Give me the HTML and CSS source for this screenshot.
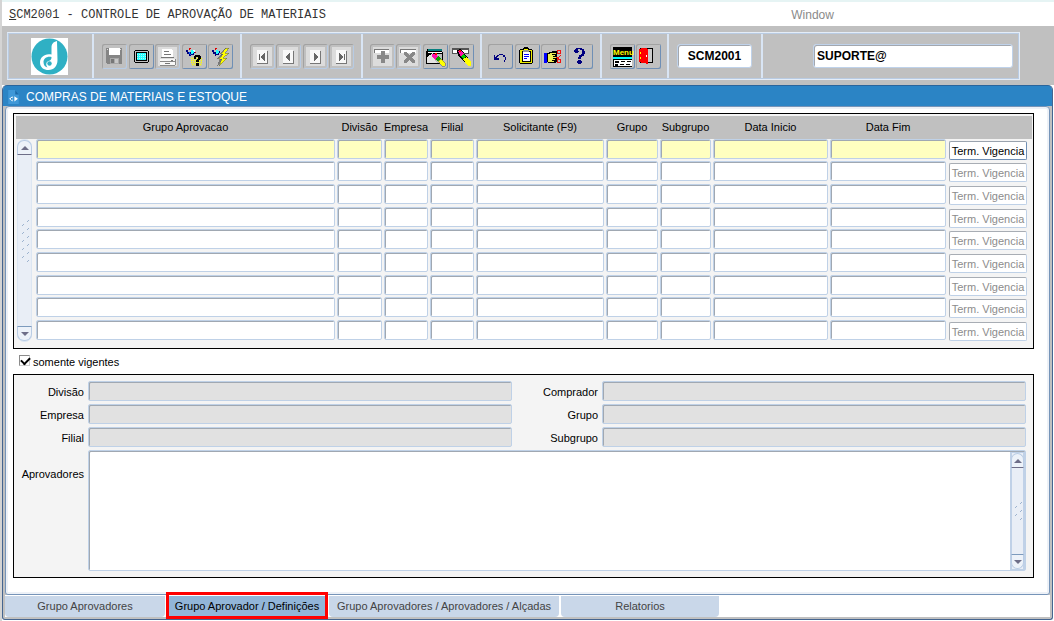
FILE: index.html
```html
<!DOCTYPE html>
<html lang="pt-BR">
<head>
<meta charset="utf-8">
<title>SCM2001 - Controle de Aprovação de Materiais</title>
<link rel="stylesheet" href="styles.css">
</head>
<body>
<header class="menubar">
  <h1 class="menubar-title"><u>S</u>CM2001 - CONTROLE DE APROVAÇÃO DE MATERIAIS</h1>
  <button class="menubar-item" type="button">Window</button>
</header>

<div class="toolbar-area">
  <div class="toolbar">
    <div class="cell cell-logo">
      <svg class="logo" viewBox="0 0 37 37" role="img" aria-label="Logo"><rect width="37" height="37" fill="#fff"/><circle cx="18.5" cy="18.5" r="18" fill="#2fb0c4"/><path d="M26 3C22 4 20.500 6 20.500 10V16.500C14 15 9 19 9 24.500C9 29.500 13 32 17.500 32C23 32 26.500 28 26.500 22Z" fill="#fff"/><path d="M20.500 19C16 18 12.500 20.500 12.500 24C12.500 27 14 29 16.500 29.500C14.500 27 15 24 17.500 23C20 22.500 20.500 21 20.500 19Z" fill="#2fb0c4"/><circle cx="18.500" cy="25.500" r="2.200" fill="#2fb0c4"/></svg>
    </div>
    <div class="cell cell-file">
      <button class="tool" type="button" disabled aria-label="Salvar"><svg viewBox="0 0 25 25"><path d="M4 4H20V20H5L4 19Z" fill="#858585"/><path d="M7 4H18V11H7Z" fill="#fff"/><path d="M5 5H6V6H5ZM18 5H19V6H18Z" fill="#ddd"/><path d="M8 14H17V20H8Z" fill="#a8a8a8"/><path d="M9 15H12V19H9Z" fill="#777"/><path d="M13 15H16V19H13Z" fill="#c8c8c8"/></svg></button>
      <button class="tool" type="button" aria-label="Tela"><svg viewBox="0 0 25 25"><path d="M6 6H19V7H20V18H19V19H6V18H5V7H6Z" fill="#000"/><path d="M6 7H19V18H6Z" fill="#c0c0c0"/><path d="M7 8H18V17H7Z" fill="#000"/><path d="M8 9H17V16H8Z" fill="#2ff"/><path d="M8 10H17M8 12H17M8 14H17" transform="translate(0 .5)" stroke="#b5f5f5" stroke-dasharray="1 1"/></svg></button>
      <button class="tool" type="button" disabled aria-label="Imprimir"><svg viewBox="0 0 25 25"><path d="M3 3H22V22H3Z" fill="#ddd"/><path d="M7 5H16L18 7V13H7Z" fill="#fff"/><path d="M9 7H14V8H9ZM9 10H16V11H9ZM6 13H19V14H6Z" fill="#777"/><path d="M5 15H20V21H5Z" fill="#f8f8f8"/><path d="M5 17H20V18H5ZM5 21H20V22H5ZM20 15H21V21H20Z" fill="#888"/><path d="M16 16H18V17H16ZM10 19H15V20H10Z" fill="#777"/></svg></button>
      <button class="tool" type="button" aria-label="Entrar consulta"><svg viewBox="0 0 25 25"><path d="M9 13H19V14H20V22H10V20H9Z" fill="#cfcf90"/><path d="M9 14.500H20M9 16.500H20M9 18.500H20M10 20.500H20" stroke="#ff0" stroke-dasharray="1 1"/><path d="M4 6H6V8H9V6H11V7H13V9H12V11H9V12H7V10H5V8H4Z" fill="#00007f"/><path d="M7 4H9V5H8V6H7ZM13 8H14V9H13Z" fill="#d00"/><path d="M9 6H11V7H12V9H11V10H9Z" fill="#2ff"/><path d="M7 8H8V10H9V11H8V10H7Z" fill="#06f"/><path d="M11 6H13V8H12V7H11Z" fill="#fff"/><path d="M13 11H18V12H19V15H18V16H17V18H14V16H15V15H16V13H14V15H12V12H13ZM14 19H17V22H14Z" fill="#000"/></svg></button>
      <button class="tool" type="button" aria-label="Executar consulta"><svg viewBox="0 0 25 25"><path d="M4 6H6V8H8V6H10V7H12V9H11V11H8V12H7V10H5V8H4Z" fill="#00007f"/><path d="M7 4H9V5H8V6H7Z" fill="#d00"/><path d="M8 6H10V7H11V9H10V10H8Z" fill="#2ff"/><path d="M17 4H20L15 9H19L13 14H17L10 22H9L12 15H9L13 10H11Z" fill="#777"/><path d="M18 4H21L17 9H21L15 14H19L11 22L14 15H11L15 10H13Z" fill="#ff0" stroke="#555" stroke-width=".5"/></svg></button>
    </div>
    <div class="cell cell-nav">
      <button class="tool tool-nav" type="button" disabled aria-label="Primeiro"><svg viewBox="0 0 25 25"><path d="M7 7H18V20H7Z" fill="#777"/><path d="M7 6H17V19H7Z" fill="#f8f8f8"/><path d="M9 10H10V16H9ZM15 9V17H14V16H13V15H12V14H11V12H12V11H13V10H14V9Z" fill="#666"/></svg></button>
      <button class="tool tool-nav" type="button" disabled aria-label="Anterior"><svg viewBox="0 0 25 25"><path d="M7 7H18V20H7Z" fill="#777"/><path d="M7 6H17V19H7Z" fill="#f8f8f8"/><path d="M14 9V17H13V16H12V15H11V14H10V12H11V11H12V10H13V9Z" fill="#666"/></svg></button>
      <button class="tool tool-nav" type="button" disabled aria-label="Próximo"><svg viewBox="0 0 25 25"><path d="M7 7H18V20H7Z" fill="#777"/><path d="M7 6H17V19H7Z" fill="#f8f8f8"/><path d="M11 9V17H12V16H13V15H14V14H15V12H14V11H13V10H12V9Z" fill="#666"/></svg></button>
      <button class="tool tool-nav" type="button" disabled aria-label="Último"><svg viewBox="0 0 25 25"><path d="M7 7H18V20H7Z" fill="#777"/><path d="M7 6H17V19H7Z" fill="#f8f8f8"/><path d="M15 10H16V16H15ZM10 9V17H11V16H12V15H13V14H14V12H13V11H12V10H11V9Z" fill="#666"/></svg></button>
    </div>
    <div class="cell cell-record">
      <button class="tool tool-nav" type="button" disabled aria-label="Inserir registro"><svg viewBox="0 0 25 25"><path d="M4 5H19V9H4Z" fill="#fff"/><path d="M4 5H19V6H4ZM4 5H5V9H4Z" fill="#777"/><path d="M11 7H15V11H19V15H15V19H11V15H7V11H11Z" fill="#888"/></svg></button>
      <button class="tool tool-nav" type="button" disabled aria-label="Excluir registro"><svg viewBox="0 0 25 25"><path d="M4 5H20V9H4Z" fill="#fff"/><path d="M4 5H20V6H4ZM4 5H5V9H4Z" fill="#777"/><path d="M8 8H11L13.500 11L16 8H19V10L16 13.500L19 17V19H16L13.500 16L11 19H8V17L11 13.500L8 10Z" fill="#888"/></svg></button>
      <button class="tool" type="button" aria-label="Editar registro"><svg viewBox="0 0 25 25"><path d="M4 5H19V8H20V20H3V7H4Z" fill="#000"/><path d="M5 5H19V7H5Z" fill="#078080"/><path d="M5 8H19V9H5Z" fill="#fff"/><path d="M10 10H19V19H10Z" fill="#c0c0c0"/><path d="M4 19V13L10 9V13L14 19Z" fill="#e4e4e4"/><path d="M9 10H13L15 13L12 16L9 13Z" fill="#f1a"/><path d="M12 9H14V11H12Z" fill="#f00"/><path d="M12 15L15 12L18 15L15 18Z" fill="#0a0"/><path d="M15 17L18 15L22 19V22H19Z" fill="#ff0" stroke="#555" stroke-width=".5"/></svg></button>
      <button class="tool" type="button" aria-label="Limpar registro"><svg viewBox="0 0 25 25"><path d="M3 4H20V10H3Z" fill="#555"/><path d="M4 6H19V9H4Z" fill="#fff"/><path d="M8 6L12 5L22 18V22H19L9 11Z" fill="#000"/><path d="M9 7L12 6L15 10L12 13Z" fill="#f1a"/><path d="M10 6H12V8H10Z" fill="#f00"/><path d="M12 12L15 10L17 13L14 15Z" fill="#0c0"/><path d="M14 15L18 13L22 18V22H19Z" fill="#ff0"/></svg></button>
    </div>
    <div class="cell cell-edit">
      <button class="tool" type="button" aria-label="Desfazer"><svg viewBox="0 0 25 25"><path d="M6 11H7V13H8V12H9V11H11V10H15V11H17V13H18V16H17V18H16V16H17V13H15V11H11V12H10V13H9V14H11V16H6Z" fill="#00007f"/></svg></button>
      <button class="tool" type="button" aria-label="Área de transferência"><svg viewBox="0 0 25 25"><path d="M5 5H8V4H9V3H13V4H14V5H17V6H18V19H17V20H5V19H4V6H5Z" fill="#000"/><path d="M5 6H17V19H5Z" fill="#ee0"/><path d="M7 7H16V18H7Z" fill="#000"/><path d="M8 8H15V17H8Z" fill="#fff"/><path d="M8 6H14V8H8Z" fill="#999"/><path d="M9 5H13V6H9Z" fill="#ff0"/><path d="M9 10H14V11H9ZM9 12H14V13H9ZM9 14H12V15H9Z" fill="#00f"/></svg></button>
      <button class="tool" type="button" aria-label="Recortar"><svg viewBox="0 0 25 25"><path d="M3 9H6V19H3Z" fill="#00f"/><path d="M6 9H8V8H11V7H17V10H16V18H15V19H7V18H6Z" fill="#000"/><path d="M7 10H9V9H15V10H11V11H14V12H12V13H15V14H12V15H14V16H11V17H13V18H7Z" fill="#ee5"/><path d="M15 13H18L20 11M15 13L20 17" fill="none" stroke="#e11"/><circle cx="18" cy="8" r="2" fill="none" stroke="#e11"/><circle cx="18" cy="17" r="2" fill="none" stroke="#e11"/></svg></button>
      <button class="tool" type="button" aria-label="Ajuda"><svg viewBox="0 0 25 25"><path d="M8 4H14V5H16V7H17V10H16V12H14V13H13V15H10V13H11V11H13V10H14V6H12V5H10V7H11V8H10V9H7V8H6V6H7V5H8ZM10 16H13V17H14V19H13V20H10V19H9V17H10Z" fill="#00007f"/></svg></button>
    </div>
    <div class="cell cell-exit">
      <button class="tool" type="button" aria-label="Menu"><svg viewBox="0 0 25 25"><path d="M3 3H22V13H3Z" fill="#000"/><text class="menu-glyph" x="3" y="11">Menu</text><path d="M3 13H22V15H3Z" fill="#0ff"/><path d="M3 15H22V23H3Z" fill="#000"/><path d="M4 16H22V22H4Z" fill="#fff"/><path d="M5 17H9V19H5ZM11 17H15V18H11ZM17 17H21V18H17ZM5 20H8V22H5ZM10 20H14V21H10ZM16 20H20V21H16Z" fill="#000"/></svg></button>
      <button class="tool" type="button" aria-label="Sair"><svg viewBox="0 0 25 25"><path d="M4 4H17V19H4Z" fill="#000"/><path d="M12 5H16V18H12Z" fill="#ccc"/><path d="M3 5H5V4H11V5H12V20H10V19H5V18H3Z" fill="#f00"/><path d="M4 8H5V10H4ZM4 13H5V15H4Z" fill="#ff0"/><path d="M10 11H11V13H10Z" fill="#fff"/></svg></button>
    </div>
    <div class="cell cell-code"><input class="status-field status-code" type="text" value="SCM2001" aria-label="Programa" readonly></div>
    <div class="cell cell-user"><input class="status-field status-user" type="text" value="SUPORTE@" aria-label="Usuário" readonly></div>
  </div>
</div>

<main class="window">
  <header class="window-title">
    <svg class="window-icon" viewBox="0 0 12 16" aria-hidden="true"><path d="M0 0H8L12 5V16H0Z" fill="#3f98d8"/><path d="M8 0V5H12Z" fill="#1c69a8"/><path d="M1 10L5 7V13ZM7 7L11 10L7 13Z" fill="#fff"/><path d="M3 9H5V11H3Z" fill="#2b84c5"/></svg>
    <h2>COMPRAS DE MATERIAIS E ESTOQUE</h2>
  </header>

  <section class="page" id="definicoes">
    <div class="panel panel-grid">
      <table class="records">
        <colgroup><col class="c-scroll"><col><col class="c-div"><col class="c-emp"><col class="c-emp"><col class="c-sol"><col class="c-gru"><col class="c-sub"><col class="c-ini"><col class="c-fim"><col class="c-act"></colgroup>
        <thead><tr><th></th><th>Grupo Aprovacao</th><th>Divisão</th><th>Empresa</th><th>Filial</th><th>Solicitante (F9)</th><th>Grupo</th><th>Subgrupo</th><th>Data Inicio</th><th>Data Fim</th><th></th></tr></thead>
        <tbody id="rows"></tbody>
      </table>
    </div>

    <label class="check-row"><input class="check" type="checkbox" checked>somente vigentes</label>

    <form class="panel details">
      <label for="divisao">Divisão</label><input class="field" id="divisao" readonly>
      <label for="comprador">Comprador</label><input class="field" id="comprador" readonly>
      <label for="empresa">Empresa</label><input class="field" id="empresa" readonly>
      <label for="grupo">Grupo</label><input class="field" id="grupo" readonly>
      <label for="filial">Filial</label><input class="field" id="filial" readonly>
      <label for="subgrupo">Subgrupo</label><input class="field" id="subgrupo" readonly>
      <label class="label-top" for="aprovadores">Aprovadores</label>
      <div class="memo">
        <textarea id="aprovadores"></textarea>
        <div class="scroll">
          <button class="scroll-up" type="button" aria-label="Subir"></button>
          <svg class="grip" viewBox="0 0 10 20" aria-hidden="true"><path d="M7 3L9 1M2 7L4 5M7 11L9 9M2 15L4 13M7 19L9 17"/></svg>
          <button class="scroll-down" type="button" aria-label="Descer"></button>
        </div>
      </div>
    </form>
  </section>

  <nav class="tabs">
    <a class="tab tab-1" href="#aprovadores">Grupo Aprovadores</a>
    <a class="tab tab-2 tab-active" href="#definicoes">Grupo Aprovador / Definições</a>
    <a class="tab tab-3" href="#alcadas">Grupo Aprovadores / Aprovadores / Alçadas</a>
    <a class="tab tab-4" href="#relatorios">Relatorios</a>
  </nav>
</main>
<script src="rows.js"></script>
</body>
</html>
```
FILE: rows.js
```js
const columns = ["Grupo Aprovacao", "Divisão", "Empresa", "Filial", "Solicitante", "Grupo", "Subgrupo", "Data Inicio", "Data Fim"];
const rowCount = 9;
const scrollCell = `<td class="scroll-cell" rowspan="${rowCount}"><div class="scroll">
  <button class="scroll-up" type="button" aria-label="Subir"></button>
  <svg class="grip grip-long" viewBox="0 0 10 44" aria-hidden="true"><path d="M7 3L9 1M2 7L4 5M7 11L9 9M2 15L4 13M7 19L9 17M2 23L4 21M7 27L9 25M2 31L4 29M7 35L9 33M2 39L4 37M7 43L9 41"/></svg>
  <button class="scroll-down" type="button" aria-label="Descer"></button>
</div></td>`;

let html = "";
for (let row = 0; row < rowCount; row++) {
  const current = row === 0;
  const cells = columns.map(name =>
    `<td><input class="field${current ? " field-current" : ""}" aria-label="${name} ${row + 1}"></td>`).join("");
  html += `<tr>${current ? scrollCell : ""}${cells}<td><button class="term" type="button"${current ? "" : " disabled"}>Term. Vigencia</button></td></tr>`;
}
document.getElementById("rows").innerHTML = html;
```
FILE: styles.css
```css
* { box-sizing: border-box; }

body {
  margin: 0;
  min-height: 100vh;
  background: #fff;
  border-left: 2px solid #d4d4d4;
  color: #000;
  font: 11px/14px "Liberation Sans", Arial, sans-serif;
}

button, input, textarea { font: inherit; color: inherit; margin: 0; }
button { padding: 0; }
h1, h2 { margin: 0; font-weight: normal; }

.menubar {
  display: grid;
  grid-template-columns: 3fr 1fr;
  align-items: center;
  height: 26px;
  padding: 2px 2px 0 7px;
  border-top: 2px solid #e6f4f4;
}
.menubar-title { font: 12px/16px "Liberation Mono", "Courier New", monospace; color: #333; }
.menubar-item { justify-self: start; border: 0; background: none; font-size: 12px; color: #8a8a8a; }

.toolbar-area { padding: 6px 34px 5px 5px; background: #c0c0c0; }
.toolbar {
  display: flex;
  height: 48px;
  border: 2px solid;
  border-color: #e4edf8 #e4edf8 #e4edf8 #d4e2f2;
  outline: 1px solid #b9cbe2;
  outline-offset: -2px;
}
.cell {
  display: flex;
  flex: none;
  align-items: center;
  justify-content: space-between;
  padding: 0 8px;
  border-right: 2px solid #d9e5f4;
}
.cell-logo { width: 85px; padding: 0 8px 0 6px; justify-content: center; }
.cell-file { width: 148px; padding: 0 7px 0 8px; }
.cell-nav { width: 121px; padding: 0 7px 0 8px; }
.cell-record { width: 119px; padding: 0 6px 0 7px; }
.cell-edit { width: 120px; padding: 0 7px 0 6px; }
.cell-exit { width: 67px; padding: 0 6px 0 8px; }
.cell-code { width: 94px; }
.cell-user { flex: 1; justify-content: flex-end; padding: 0 5px; border-right: 0; }
.logo { display: block; width: 37px; height: 37px; }

.tool {
  width: 25px;
  height: 25px;
  border: 0;
  border-radius: 2px;
  background: #c0c0c0;
  box-shadow: inset 1px 1px #a2a2a2, inset -1px -1px #6f8fb5;
}
.tool:disabled { box-shadow: inset 1px 1px #a2a2a2, inset -1px -1px #b7cbe4; }
.tool > svg { display: block; width: 25px; height: 25px; shape-rendering: crispEdges; }
.tool-nav:disabled { background: linear-gradient(#dcdcdc, #dcdcdc) center / 19px 19px no-repeat #c0c0c0; }
.menu-glyph { font: bold 8px "Liberation Sans", Arial, sans-serif; fill: #ff0; }

.status-field {
  height: 24px;
  padding: 0 3px;
  border: 1px solid #bfd2ea;
  border-radius: 3px;
  background: #fff;
  box-shadow: inset 1px 1px #a3a7ae;
  font-size: 12px;
  font-weight: bold;
}
.status-code { width: 75px; text-align: center; }
.status-user { width: 200px; }

.window {
  border: 1px solid #456590;
  border-top: 0;
  border-radius: 5px 5px 3px 3px;
  margin-right: 1px;
  padding: 0 2px 2px;
  background: #c0c0c0;
  overflow: hidden;
}
.window-title {
  display: flex;
  align-items: center;
  gap: 7px;
  height: 21px;
  margin: 0 -2px;
  padding: 2px 5px 0;
  border-top: 1px solid #2a659c;
  border-radius: 4px 4px 0 0;
  background: #2b84c5;
  color: #fff;
}
.window-title h2 { font-size: 12px; line-height: 16px; }
.window-icon { width: 11px; height: 14px; }

.page {
  padding: 6px 15px 16px 7px;
  border: 1px solid #7694b8;
  border-radius: 4px 4px 3px 3px;
  background: #fff;
  box-shadow: inset 0 0 0 2px #edf1f7;
}
.panel { border: 1px solid #000; background: #f4f4f4; }
.panel-grid { padding: 2px 1px 5px 2px; }

.records { width: 100%; table-layout: fixed; border-collapse: collapse; }
.records th { height: 23px; padding: 0 0 2px; background: #c0c0c0; font-weight: normal; }
.records td { padding: 0 1px; vertical-align: top; }
.records tbody tr { height: 23px; }
.records tbody tr:nth-child(3n + 1) { height: 22px; }
.c-scroll { width: 19px; }
.c-div { width: 47px; }
.c-emp { width: 46px; }
.c-sol { width: 130px; }
.c-gru { width: 54px; }
.c-sub { width: 53px; }
.c-ini { width: 117px; }
.c-fim { width: 118px; }
.c-act { width: 85px; }

.field {
  display: block;
  width: 100%;
  height: 20px;
  padding: 0 3px;
  border: 1px solid #bfd1e7;
  border-radius: 2px;
  background: #fff;
  box-shadow: inset 1px 1px #a0a8b2;
  outline: 0;
}
.field-current { background: #ffffc0; }
.details .field { background: #e1e1e1; }

.term {
  display: block;
  width: 78px;
  height: 19px;
  margin: 2px 0 0 1px;
  border: 1px solid;
  border-color: #9aa3ae #6f8fb5 #6f8fb5 #9aa3ae;
  border-radius: 2px;
  background: #fff;
  white-space: nowrap;
}
.term:disabled { border-color: #a8adb4 #bfd1e7 #bfd1e7 #a8adb4; color: #8c8c8c; }

.scroll {
  display: flex;
  flex-direction: column;
  align-items: center;
  justify-content: space-between;
  width: 15px;
  background: #e9eef6;
  border: 1px solid #dce6f2;
  border-radius: 7px;
}
.records .scroll-cell { padding: 0 0 0 1px; }
.scroll-cell .scroll { height: 203px; }
.scroll-up, .scroll-down {
  display: flex;
  align-items: center;
  justify-content: center;
  width: 15px;
  height: 15px;
  border: 1px solid #b9cce4;
  background: #edf2f9;
}
.scroll-up { border-radius: 7px 7px 0 0; border-bottom-color: #6e6e88; }
.scroll-down { border-radius: 0 0 7px 7px; border-top-color: #7d9bbd; }
.scroll-up::before, .scroll-down::before {
  content: "";
  border: 4px solid transparent;
  border-top-width: 0;
  border-bottom: 4px solid #6e6e88;
}
.scroll-down::before { border-top: 4px solid #6e6e88; border-bottom-width: 0; }
.grip { width: 10px; height: 20px; fill: none; stroke: #9db3cf; }
.grip-long { height: 44px; }

.check-row { display: flex; align-items: center; gap: 3px; height: 25px; padding-left: 6px; }
.check {
  appearance: none;
  width: 11px;
  height: 11px;
  margin-bottom: 3px;
  border: 1px solid;
  border-color: #8b8b8b #cfcfcf #cfcfcf #8b8b8b;
  background: #fff;
}
.check:checked::before {
  content: "";
  display: block;
  width: 7px;
  height: 4px;
  margin: 1px;
  border: solid #000;
  border-width: 0 0 2px 2px;
  transform: rotate(-45deg);
}

.details {
  display: grid;
  grid-template-columns: 74px 1fr 90px 1fr;
  gap: 3px 0;
  padding: 6px 7px 6px 0;
}
.details label { padding-right: 4px; line-height: 22px; height: 20px; text-align: right; }
.details .label-top { margin-top: 13px; }
.memo {
  display: flex;
  grid-column: 2 / 5;
  height: 121px;
  border: 1px solid #bfd1e7;
  border-radius: 2px;
  background: #fff;
  box-shadow: inset 1px 1px #a0a8b2;
}
.memo textarea { flex: 1; border: 0; background: none; resize: none; outline: 0; overflow: hidden; }
.memo .scroll { border: 1px solid #c0d1e7; border-radius: 0; background: linear-gradient(90deg, #e9eef6, #e9eef6) center / 11px no-repeat #c0d1e7; margin-top: 1px; }
.memo .scroll-up, .memo .scroll-down { width: 13px; }

.tabs { display: flex; gap: 2px; padding-top: 1px; background: #fff; }
.tab {
  position: relative;
  height: 21px;
  border-radius: 0 0 4px 4px;
  background: #c9d7e9;
  color: #444;
  line-height: 21px;
  text-align: center;
  text-decoration: none;
  white-space: nowrap;
}
.tab-1 { width: 160px; }
.tab-2 { width: 160px; }
.tab-3 { width: 230px; }
.tab-4 { width: 158px; }
.tab-active { background: #92b5d8; color: #000; }
.tab-active::after {
  content: "";
  position: absolute;
  inset: -4px -1px -2px -1px;
  border: 3px solid #f00;
}
```
